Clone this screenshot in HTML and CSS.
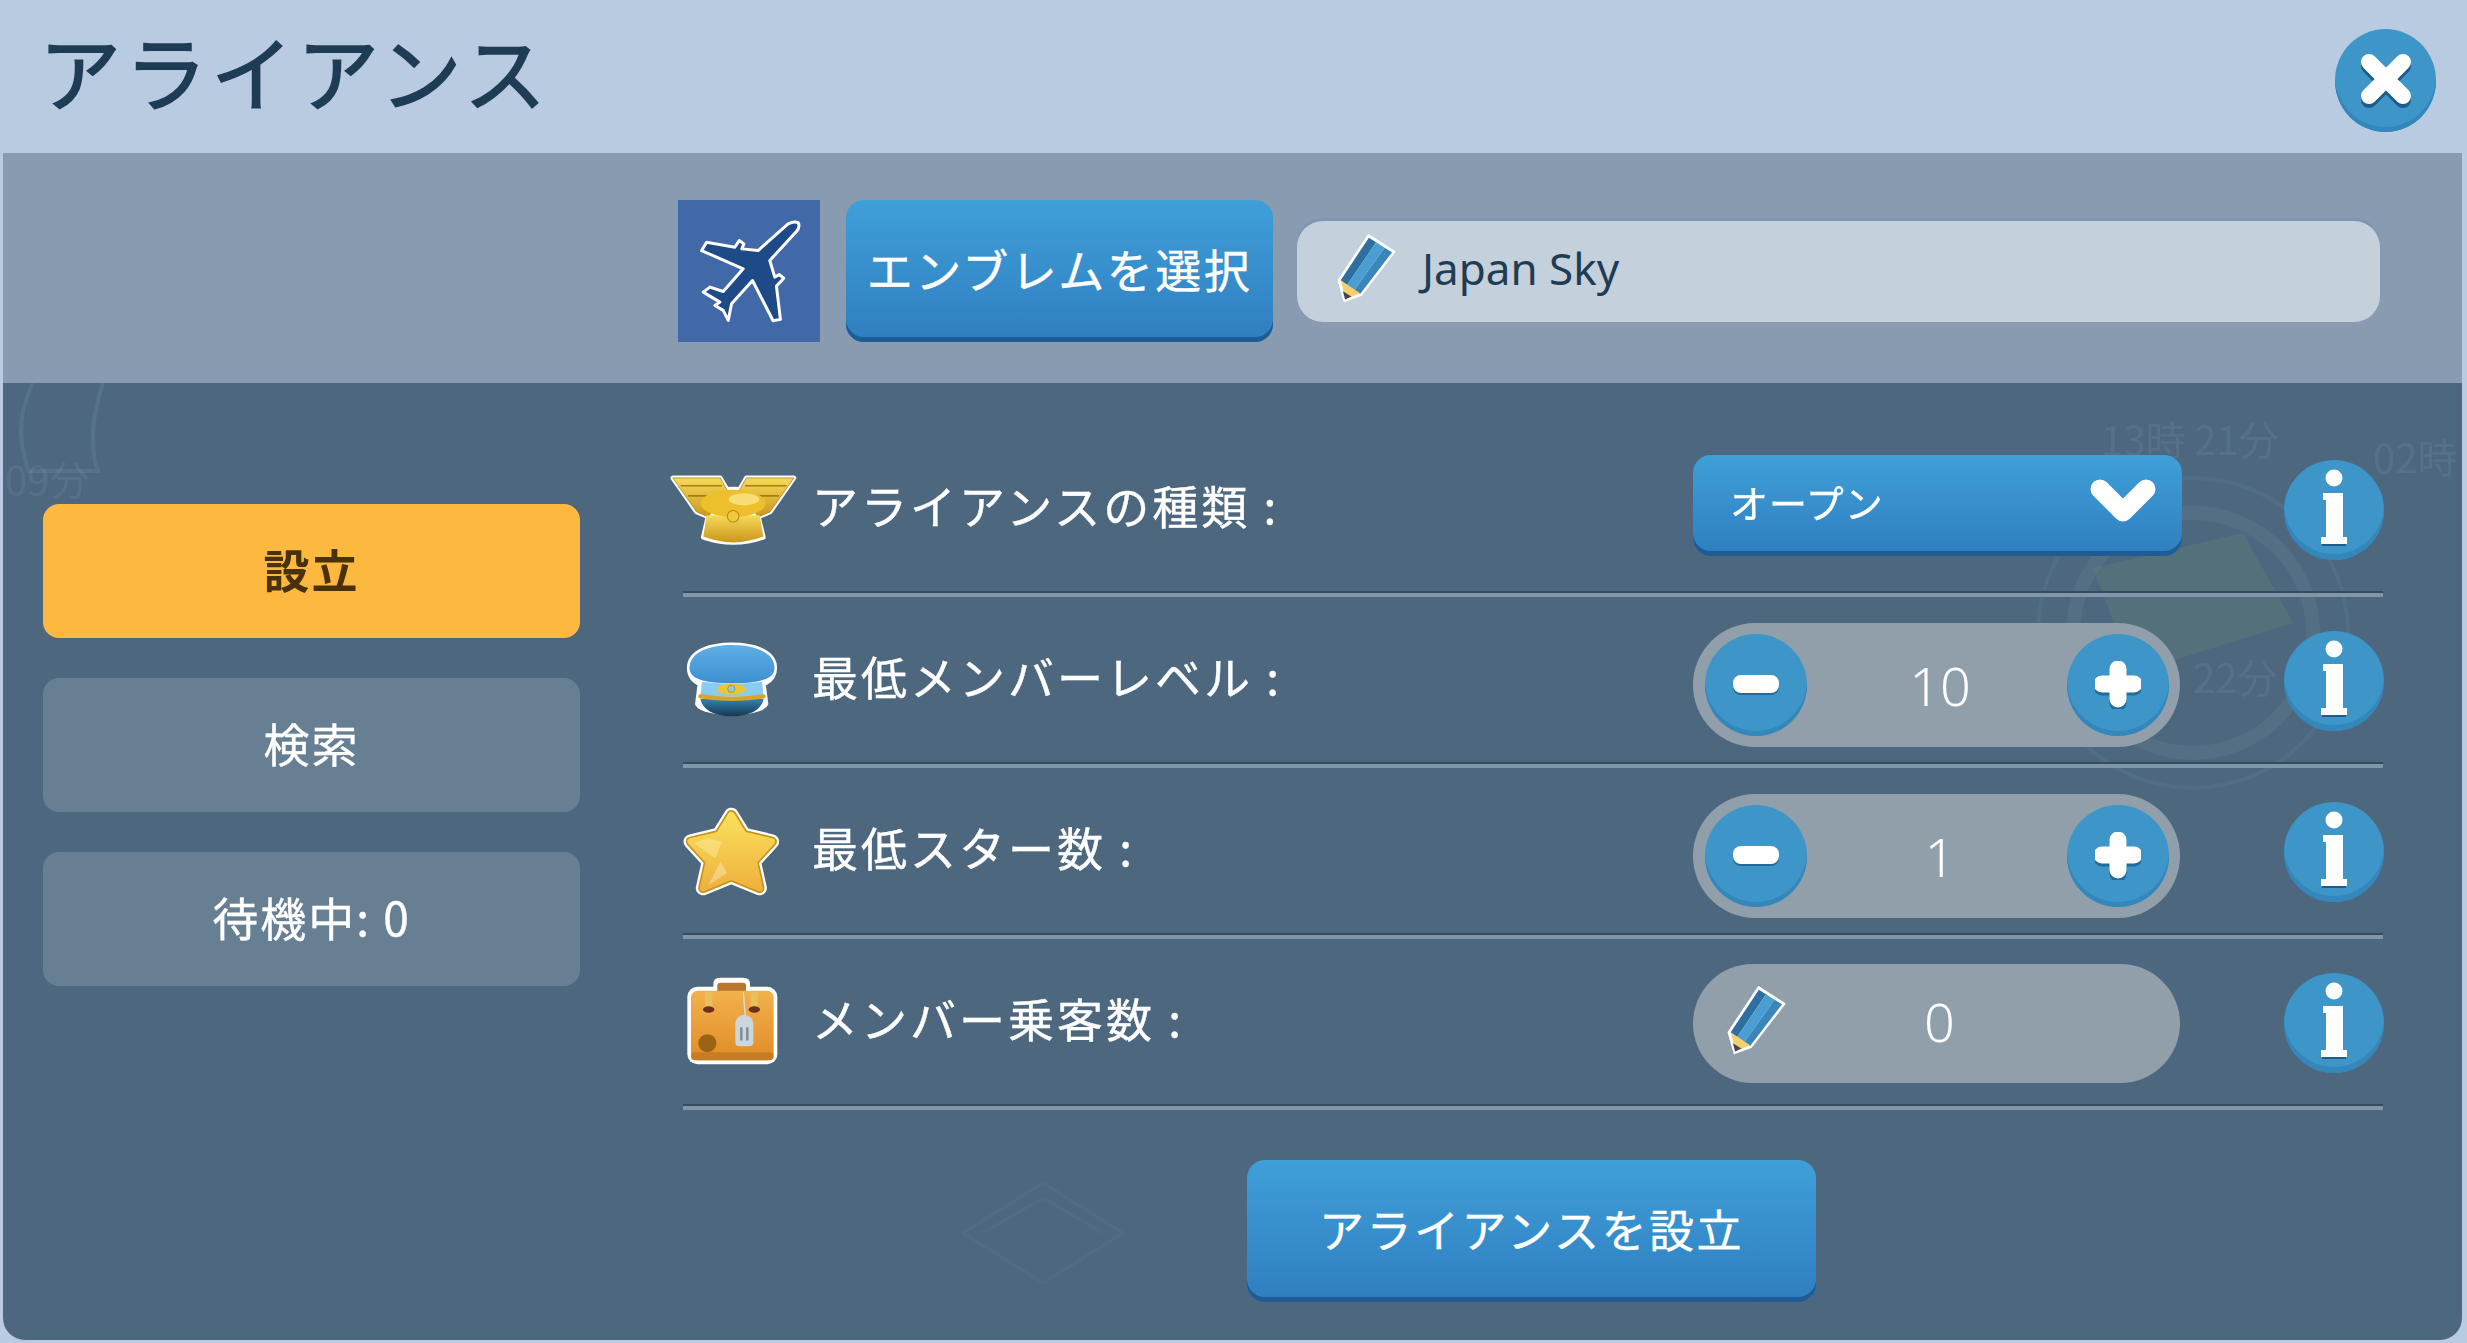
FILE: index.html
```html
<!DOCTYPE html>
<html lang="ja">
<head>
    <title>アライアンス</title>
    <link rel="stylesheet" href="styles.css">
</head>
<body>
<svg class="defs" width="0" height="0">
    <defs>
        <linearGradient id="gold" x1="0" y1="0" x2="0" y2="1">
            <stop offset="0" stop-color="#f7d95a"/>
            <stop offset="1" stop-color="#c9971c"/>
        </linearGradient>
        <linearGradient id="starfill" x1="0" y1="0" x2="0" y2="1">
            <stop offset="0" stop-color="#fbe05c"/>
            <stop offset="1" stop-color="#eeb23e"/>
        </linearGradient>
        <linearGradient id="capfill" x1="0" y1="0" x2="0" y2="1">
            <stop offset="0" stop-color="#5fb0e6"/>
            <stop offset="1" stop-color="#3d8fd0"/>
        </linearGradient>
        <linearGradient id="visor" x1="0" y1="0" x2="0" y2="1">
            <stop offset="0" stop-color="#3386b8"/>
            <stop offset="1" stop-color="#17384f"/>
        </linearGradient>
        <linearGradient id="casefill" x1="0" y1="0" x2="0" y2="1">
            <stop offset="0" stop-color="#f2b24c"/>
            <stop offset="1" stop-color="#e08c28"/>
        </linearGradient>
        <symbol id="pencil" viewBox="78 52 196 230">
            <polygon points="181,62 264,115 157,254 104,273 85,206" fill="#fff" stroke="#fff" stroke-width="6" stroke-linejoin="round"/>
            <polygon points="182,70 205,85 112,222 92,206" fill="#2f6f9f"/>
            <polygon points="205,85 232,102 135,238 112,222" fill="#4a9ed2"/>
            <polygon points="232,102 256,117 154,250 135,238" fill="#3a86bb"/>
            <polygon points="92,206 154,248 108,267" fill="#f5d070"/>
            <polygon points="99,241 126,258 106,268" fill="#43464f"/>
        </symbol>
        <symbol id="info" viewBox="0 0 100 100">
            <circle cx="50" cy="18" r="8.5" fill="#fff"/>
            <path d="M39 33H59V77H63V84H37V77H42V40H39Z" fill="#fff"/>
            <rect x="38" y="84" width="24" height="2" fill="#1f5c88"/>
        </symbol>
        <symbol id="minus" viewBox="0 0 46 20">
            <rect x="0" y="2" width="46" height="18" rx="8" fill="#216c9b"/>
            <rect x="0" y="0" width="46" height="18" rx="8" fill="#fff"/>
        </symbol>
        <symbol id="plus" viewBox="0 0 46 48">
            <path d="M23 8V40M7 24H39" stroke="#216c9b" stroke-width="17" stroke-linecap="round" transform="translate(0 2)"/>
            <path d="M23 8V38M7 23H39" stroke="#fff" stroke-width="17" stroke-linecap="round"/>
        </symbol>
    </defs>
</svg>

<div class="panel">
    <header class="title-bar">
        <h1 class="title">アライアンス</h1>
        <div class="close-btn">
            <svg width="54" height="56" viewBox="0 0 54 56">
                <path d="M10 11L44 45M44 11L10 45" stroke="#1f5c88" stroke-width="16" stroke-linecap="round" transform="translate(0 3)"/>
                <path d="M10 10L44 44M44 10L10 44" stroke="#fff" stroke-width="16" stroke-linecap="round"/>
            </svg>
        </div>
    </header>

    <section class="name-bar">
        <div class="emblem">
            <svg width="142" height="142" viewBox="55 33 425 427">
                <path d="M412 100C420 102 420 118 410 128L330 215L345 265L358 257L372 268L350 292L362 392L340 396L278 275L215 345L205 395L190 365L165 350L180 340L130 310L150 295L190 308L250 240L125 185L140 160L225 175L238 155L252 165L246 180L295 185L385 105C394 100 404 98 412 100Z" fill="#1f4a88" stroke="#fff" stroke-width="9" stroke-linejoin="round"/>
            </svg>
        </div>
        <div class="btn emblem-btn">エンブレムを選択</div>
        <div class="name-input">
            <svg class="pencil-icon"><use href="#pencil"/></svg>
            <span>Japan Sky</span>
        </div>
    </section>

    <main class="content">
        <svg class="map-bg" width="2460" height="957" viewBox="0 0 2460 957">
            <g fill="none" stroke="#8fb2d0" stroke-width="4" opacity="0.14">
                <path d="M30 0C10 40 20 70 25 88H95C85 60 90 30 100 0"/>
                <circle cx="2190" cy="250" r="120" stroke="#a8c0c8" stroke-width="14" opacity="0.6"/>
                <circle cx="2190" cy="250" r="155" opacity="0.6"/>
            </g>
            <path d="M2090 185L2240 150L2290 240L2130 290Z" fill="#7fa060" opacity="0.14"/>
            <g fill="none" stroke="#8aa2b4" stroke-width="3" opacity="0.07">
                <path d="M960 850L1040 800L1120 850L1040 900Z"/>
                <path d="M980 850L1040 815L1100 850"/>
            </g>
            <g class="map-text">
                <text x="2" y="112">09分</text>
                <text x="2098" y="72">13時 21分</text>
                <text x="2370" y="90">02時</text>
                <text x="2190" y="310">22分</text>
            </g>
        </svg>

        <nav class="side">
            <div class="tab tab-on">設立</div>
            <div class="tab">検索</div>
            <div class="tab">待機中: 0</div>
        </nav>

        <div class="settings">
            <div class="row">
                <div class="row-icon">
                    <svg class="wings" viewBox="88 95 395 235" width="134" height="80">
                        <g stroke="#fff" stroke-width="14" stroke-linejoin="round" fill="#fff">
                            <path d="M105 115H245L265 150L210 230L175 215Z"/>
                            <path d="M462 115H322L302 150L357 230L392 215Z"/>
                            <ellipse cx="283" cy="190" rx="98" ry="42"/>
                            <path d="M210 225H356L372 290Q283 320 195 290Z"/>
                        </g>
                        <path d="M105 115H245L265 150L210 230L175 215Z" fill="url(#gold)" stroke="#9a7410" stroke-width="2"/>
                        <path d="M462 115H322L302 150L357 230L392 215Z" fill="url(#gold)" stroke="#9a7410" stroke-width="2"/>
                        <path d="M128 138H250M150 168H215M440 138H318M418 168H352" stroke="#a87f12" stroke-width="5"/>
                        <path d="M205 225H361L372 288Q283 322 195 288Z" fill="url(#gold)"/>
                        <ellipse cx="283" cy="190" rx="96" ry="40" fill="#eebf2c"/>
                        <ellipse cx="315" cy="178" rx="45" ry="18" fill="#f8de76"/>
                        <circle cx="283" cy="228" r="17" fill="#f1c93e" stroke="#b58c18" stroke-width="3"/>
                    </svg>
                </div>
                <div class="label">アライアンスの種類 :</div>
                <div class="btn dropdown">
                    <span>オープン</span>
                    <svg width="66" height="44" viewBox="0 0 66 44">
                        <path d="M10 10L33 33L56 10" fill="none" stroke="#fff" stroke-width="19" stroke-linecap="round" stroke-linejoin="round"/>
                    </svg>
                </div>
                <div class="info-btn"><svg width="100" height="100"><use href="#info"/></svg></div>
            </div>

            <div class="row">
                <div class="row-icon">
                    <svg viewBox="125 595 300 250" width="98" height="82">
                        <path d="M145 680C145 630 210 610 275 610C340 610 405 630 405 680C405 705 390 720 370 728L378 790C360 825 190 825 170 790L178 728C160 720 145 705 145 680Z" fill="#fff" stroke="#fff" stroke-width="16" stroke-linejoin="round"/>
                        <path d="M145 680C145 630 210 610 275 610C340 610 405 630 405 680C405 710 370 727 275 727C180 727 145 710 145 680Z" fill="url(#capfill)"/>
                        <path d="M183 722Q275 735 367 722L372 768H178Z" fill="#8accf0"/>
                        <path d="M178 775Q275 770 372 775Q360 826 275 828Q190 826 178 775Z" fill="url(#visor)"/>
                        <path d="M178 767Q275 782 372 767" fill="none" stroke="#dca427" stroke-width="13" stroke-linecap="round"/>
                        <ellipse cx="273" cy="745" rx="44" ry="17" fill="#e8c53a"/>
                        <circle cx="273" cy="744" r="11" fill="#8accf0" stroke="#b9921c" stroke-width="3"/>
                    </svg>
                </div>
                <div class="label">最低メンバーレベル :</div>
                <div class="stepper">
                    <div class="step-btn"><svg width="46" height="20"><use href="#minus"/></svg></div>
                    <span class="value">10</span>
                    <div class="step-btn"><svg width="46" height="48"><use href="#plus"/></svg></div>
                </div>
                <div class="info-btn"><svg width="100" height="100"><use href="#info"/></svg></div>
            </div>

            <div class="row">
                <div class="row-icon">
                    <svg viewBox="125 80 300 280" width="100" height="93">
                        <polygon points="273,110 310,170 395,190 340,250 358,330 273,295 188,330 206,250 151,190 236,170" fill="#fff" stroke="#fff" stroke-width="44" stroke-linejoin="round"/>
                        <polygon points="273,110 310,170 395,190 340,250 358,330 273,295 188,330 206,250 151,190 236,170" fill="#c9921c" stroke="#c9921c" stroke-width="30" stroke-linejoin="round"/>
                        <polygon points="273,110 310,170 395,190 340,250 358,330 273,295 188,330 206,250 151,190 236,170" fill="url(#starfill)" stroke="url(#starfill)" stroke-width="20" stroke-linejoin="round"/>
                        <path d="M200 180L245 190L225 240L160 195Z" fill="#fbe99a" opacity="0.5"/>
                        <path d="M205 320L240 250L260 285Z" fill="#f9dfa0" opacity="0.6"/>
                    </svg>
                </div>
                <div class="label">最低スター数 :</div>
                <div class="stepper">
                    <div class="step-btn"><svg width="46" height="20"><use href="#minus"/></svg></div>
                    <span class="value">1</span>
                    <div class="step-btn"><svg width="46" height="48"><use href="#plus"/></svg></div>
                </div>
                <div class="info-btn"><svg width="100" height="100"><use href="#info"/></svg></div>
            </div>

            <div class="row">
                <div class="row-icon">
                    <svg viewBox="135 595 285 272" width="95" height="91">
                        <path d="M225 630V615Q225 602 240 602H310Q325 602 325 615V630" fill="#fff" stroke="#fff" stroke-width="10"/>
                        <rect x="142" y="624" width="270" height="232" rx="30" fill="#fff"/>
                        <path d="M232 640V620Q232 612 242 612H308Q318 612 318 620V640Z" fill="#b9762c"/>
                        <rect x="153" y="636" width="248" height="208" rx="20" fill="url(#casefill)"/>
                        <rect x="153" y="820" width="248" height="24" rx="12" fill="#c87d24"/>
                        <rect x="195" y="640" width="22" height="50" fill="#e8c05a"/>
                        <rect x="332" y="640" width="22" height="50" fill="#e8c05a"/>
                        <ellipse cx="206" cy="692" rx="17" ry="10" fill="#6d2e1e"/>
                        <ellipse cx="343" cy="692" rx="17" ry="10" fill="#6d2e1e"/>
                        <circle cx="202" cy="793" r="27" fill="#9a6414"/>
                        <path d="M310 640L316 715" stroke="#d8dde0" stroke-width="4"/>
                        <path d="M286 735Q286 712 312 708Q340 712 340 735V790Q340 802 326 802H298Q286 802 286 790Z" fill="#cdd6dc"/>
                        <path d="M304 745V785M322 745V785" stroke="#7d8890" stroke-width="7"/>
                    </svg>
                </div>
                <div class="label">メンバー乗客数 :</div>
                <div class="pill">
                    <svg class="pencil-icon pill-pencil"><use href="#pencil"/></svg>
                    <span class="value">0</span>
                </div>
                <div class="info-btn"><svg width="100" height="100"><use href="#info"/></svg></div>
            </div>

            <div class="submit-wrap">
                <div class="btn submit-btn">アライアンスを設立</div>
            </div>
        </div>
    </main>
</div>
</body>
</html>
```

FILE: styles.css
```css
* {
    box-sizing: border-box;
}
body {
    margin: 0;
    width: 2467px;
    height: 1343px;
    overflow: hidden;
    background-color: #b8cbe1;
    font-family: "Noto Sans CJK JP", "Noto Sans", sans-serif;
    color: #ffffff;
}
.defs {
    display: block;
}
.panel {
    display: flex;
    flex-direction: column;
    height: 1343px;
    padding: 0 5px 3px 3px;
}

/* top bar */
.title-bar {
    display: flex;
    align-items: center;
    justify-content: space-between;
    height: 153px;
    margin: 0 -5px 0 -3px;
    padding: 0 31px 0 39px;
    background-color: #b8cbe1;
}
.title {
    margin: -15px 0 0;
    font-size: 82px;
    font-weight: 400;
    letter-spacing: 4px;
    color: #1f3c55;
    -webkit-text-stroke: 1.5px #1f3c55;
}
.close-btn {
    display: flex;
    align-items: center;
    justify-content: center;
    width: 101px;
    height: 103px;
    margin-top: 7px;
    border-radius: 50%;
    background-color: #3d95c8;
    box-shadow: inset 0 -5px 0 #3387bb;
}

/* emblem and name */
.name-bar {
    display: flex;
    align-items: center;
    height: 230px;
    padding: 6px 0 0 675px;
    background-color: #889bb0;
}
.emblem {
    display: flex;
    width: 142px;
    height: 142px;
    margin-right: 26px;
    background-color: #4169a8;
}
.btn {
    display: flex;
    align-items: center;
    border-radius: 18px;
    background: linear-gradient(#3f9fd8, #2f7ec0);
    box-shadow: inset 0 -5px 0 #1d5c94;
    font-size: 46px;
    -webkit-text-stroke: 0.4px #ffffff;
}
.emblem-btn {
    justify-content: center;
    width: 427px;
    height: 142px;
    margin-right: 24px;
    padding-bottom: 6px;
    letter-spacing: 2.5px;
}
.name-input {
    display: flex;
    align-items: center;
    gap: 24px;
    width: 1083px;
    height: 101px;
    padding: 0 0 6px 39px;
    border-radius: 26px;
    background-color: #c4d0db;
    box-shadow: 0 -3px 0 #7f93b5;
    font-family: "Noto Sans", sans-serif;
    font-size: 44px;
    color: #1f3c55;
}
.pencil-icon {
    width: 62px;
    height: 72px;
    flex: none;
}

/* main area */
.content {
    position: relative;
    flex: 1;
    display: grid;
    grid-template-columns: 537px 1700px;
    column-gap: 103px;
    padding-left: 40px;
    overflow: hidden;
    border-radius: 0 0 22px 22px;
    background-color: #4d687e;
}
.map-bg {
    position: absolute;
    left: 0;
    top: 0;
}
.map-text {
    font-size: 40px;
    fill: #9db4c6;
    opacity: 0.12;
}
.side {
    position: relative;
    display: flex;
    flex-direction: column;
    gap: 40px;
    padding-top: 121px;
}
.tab {
    display: flex;
    align-items: center;
    justify-content: center;
    height: 134px;
    padding-bottom: 7px;
    border-radius: 16px;
    background-color: #667f93;
    font-size: 46px;
    letter-spacing: 2px;
    -webkit-text-stroke: 0.4px #ffffff;
}
.tab-on {
    background-color: #fdb93f;
    color: #4a3208;
    font-weight: 700;
    -webkit-text-stroke: 0;
}
.settings {
    position: relative;
    padding-top: 43px;
}
.row {
    display: grid;
    grid-template-columns: 129px 881px 490px 100px;
    align-items: center;
    height: 171px;
    border-bottom: 4px solid #7f97a9;
    box-shadow: inset 0 -2px 0 #344c60;
}
.row > .info-btn {
    margin-left: 101px;
}
.row-icon {
    display: flex;
    justify-content: center;
    width: 98px;
}
.row-icon svg {
    flex: none;
}
.wings {
    margin: 2px 0 0 4px;
}
.label {
    padding-bottom: 12px;
    font-size: 46px;
    letter-spacing: 3px;
    white-space: nowrap;
    -webkit-text-stroke: 0.4px #ffffff;
}
.dropdown {
    justify-content: space-between;
    width: 489px;
    height: 101px;
    margin-top: -9px;
    padding: 0 26px 8px 37px;
    font-size: 38px;
    letter-spacing: 1px;
}
.stepper, .pill {
    display: flex;
    align-items: center;
    justify-content: space-between;
    width: 487px;
    border-radius: 62px;
    background-color: #919fab;
}
.stepper {
    height: 124px;
    margin-top: 8px;
    padding: 0 11px 0 12px;
}
.step-btn {
    display: flex;
    align-items: center;
    justify-content: center;
    width: 102px;
    height: 102px;
    border-radius: 50%;
    background-color: #3d95c8;
    box-shadow: inset 0 -5px 0 #3387bb;
}
.value {
    margin-left: 6px;
    font-family: "Noto Sans", sans-serif;
    font-size: 54px;
    font-weight: 300;
}
.pill {
    position: relative;
    justify-content: center;
    height: 119px;
    margin-top: 2px;
    padding-bottom: 6px;
}
.pill-pencil {
    position: absolute;
    left: 33px;
    top: 20px;
}
.info-btn {
    display: flex;
    width: 100px;
    height: 100px;
    border-radius: 50%;
    background-color: #3d95c8;
    box-shadow: inset 0 -6px 0 #3387bb;
}
.submit-wrap {
    display: flex;
    justify-content: center;
    margin: 50px 3px 0 0;
}
.submit-btn {
    justify-content: center;
    width: 569px;
    height: 142px;
    padding-bottom: 6px;
    font-size: 45px;
    letter-spacing: 2.5px;
}
```
